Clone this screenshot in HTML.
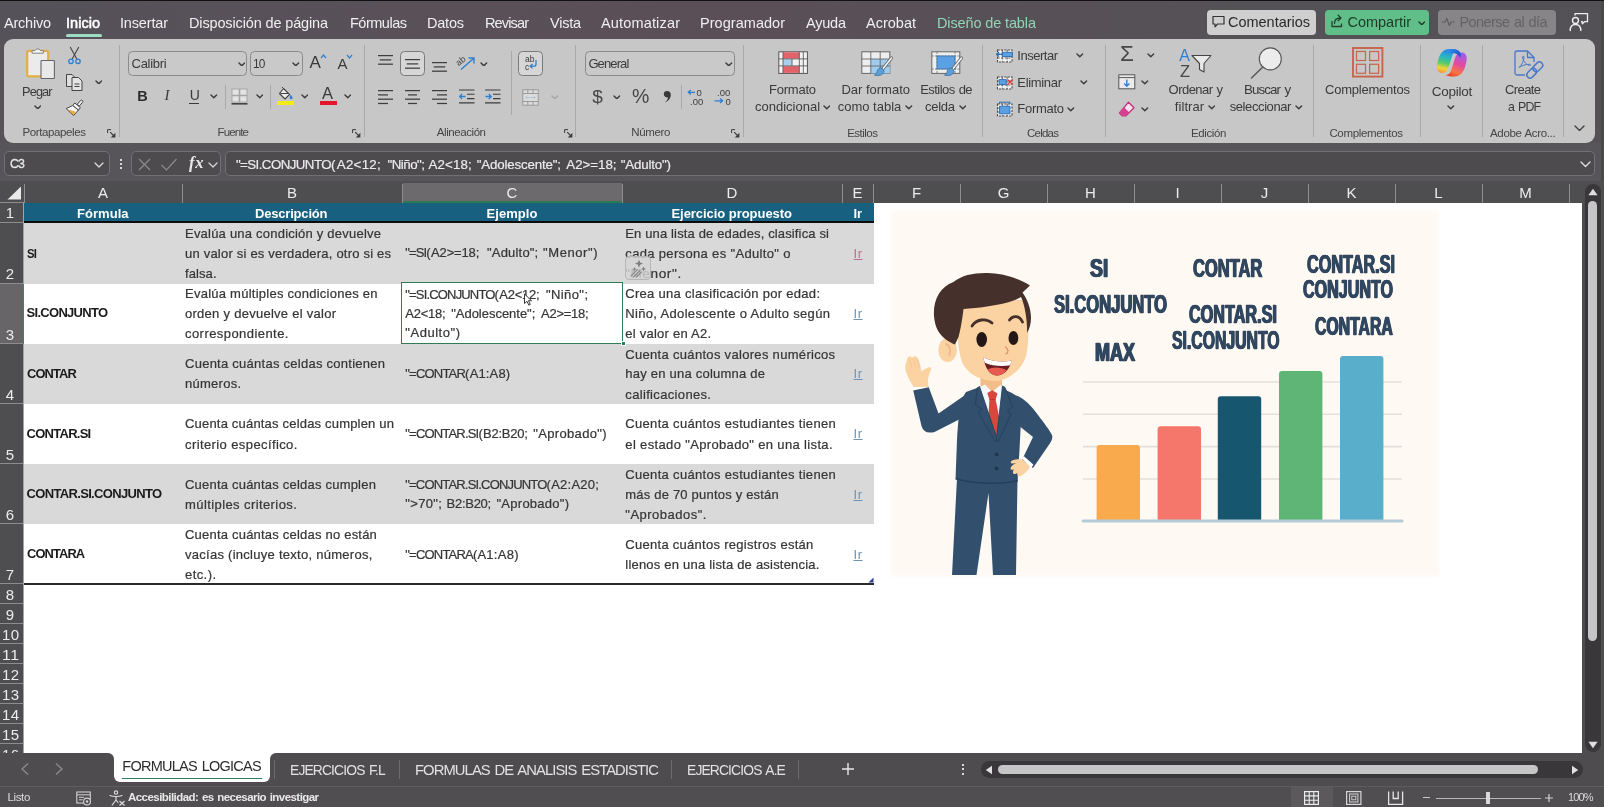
<!DOCTYPE html>
<html lang="es"><head><meta charset="utf-8"><title>Excel</title><style>
html,body{margin:0;padding:0;background:#4d4b4e;}
body{width:1604px;height:807px;overflow:hidden;position:relative;font-family:"Liberation Sans",sans-serif;}
#app{position:absolute;left:0;top:0;width:1604px;height:807px;overflow:hidden;background:#57545a;opacity:0.9999;}
.t{position:absolute;white-space:nowrap;line-height:1;transform-origin:0 50%;}
.b{position:absolute;display:block;}
</style></head><body><div id="app">
<div class="b" style="left:0.0px;top:0.0px;width:1604.0px;height:1.0px;background:#111;"></div>
<div class="b" style="left:0.0px;top:1.0px;width:1604.0px;height:142.0px;background:linear-gradient(90deg,#55525a 0%,#5a5058 30%,#5b4f57 45%,#585057 60%,#545256 80%,#535155 100%);"></div>
<div class="b" style="left:1600.5px;top:1.0px;width:3.5px;height:806.0px;background:#4b494c;"></div>
<div class="b" style="left:3.5px;top:39.0px;width:1591.5px;height:103.5px;background:#c7c7c7;border-radius:9px;"></div>
<div class="b" style="left:0.0px;top:143.0px;width:1598.0px;height:40.0px;background:#57545a;"></div>
<div class="b" style="left:0.0px;top:181.0px;width:1604.0px;height:572.0px;background:#4e4d4f;"></div>
<span class="t" style="left:4.0px;top:16.3px;font-size:14.5px;color:#efefef;letter-spacing:-0.22px;">Archivo</span>
<span class="t" style="left:66.0px;top:16.3px;font-size:14.5px;color:#ffffff;letter-spacing:0.03px;-webkit-text-stroke:0.55px #fff;">Inicio</span>
<span class="t" style="left:120.0px;top:16.3px;font-size:14.5px;color:#efefef;letter-spacing:-0.17px;">Insertar</span>
<span class="t" style="left:189.0px;top:16.3px;font-size:14.5px;color:#efefef;letter-spacing:-0.14px;">Disposición de página</span>
<span class="t" style="left:350.0px;top:16.3px;font-size:14.5px;color:#efefef;letter-spacing:-0.49px;">Fórmulas</span>
<span class="t" style="left:427.0px;top:16.3px;font-size:14.5px;color:#efefef;letter-spacing:-0.22px;">Datos</span>
<span class="t" style="left:485.0px;top:16.3px;font-size:14.5px;color:#efefef;letter-spacing:-0.86px;">Revisar</span>
<span class="t" style="left:550.0px;top:16.3px;font-size:14.5px;color:#efefef;letter-spacing:-0.24px;">Vista</span>
<span class="t" style="left:601.0px;top:16.3px;font-size:14.5px;color:#efefef;letter-spacing:0.16px;">Automatizar</span>
<span class="t" style="left:700.0px;top:16.3px;font-size:14.5px;color:#efefef;letter-spacing:0.04px;">Programador</span>
<span class="t" style="left:806.0px;top:16.3px;font-size:14.5px;color:#efefef;letter-spacing:-0.21px;">Ayuda</span>
<span class="t" style="left:866.0px;top:16.3px;font-size:14.5px;color:#efefef;">Acrobat</span>
<span class="t" style="left:937.0px;top:16.3px;font-size:14.5px;color:#8fd6b4;letter-spacing:-0.13px;">Diseño de tabla</span>
<div class="b" style="left:66.0px;top:34.0px;width:36.0px;height:3.0px;background:#9fdcc4;border-radius:1.5px;"></div>
<div class="b" style="left:1206.7px;top:10.0px;width:109.2px;height:24.5px;background:#cfcfcf;border-radius:4px;"></div>
<svg class="b" style="left:1211.0px;top:14.0px;" width="15" height="15" viewBox="0 0 15 15"><path d="M2 2.5 h11 v7.5 h-6.5 l-2.5 2.8 v-2.8 h-2 z" fill="none" stroke="#333" stroke-width="1.2" stroke-linejoin="round"/></svg>
<span class="t" style="left:1228.0px;top:14.7px;font-size:14.5px;color:#2a2a2a;letter-spacing:-0.02px;">Comentarios</span>
<div class="b" style="left:1325.1px;top:10.0px;width:103.8px;height:24.5px;background:#60bf88;border-radius:4px;"></div>
<svg class="b" style="left:1329.0px;top:13.0px;" width="16" height="16" viewBox="0 0 16 16"><path d="M3 8 v5.5 h9.5 v-3" fill="none" stroke="#20402d" stroke-width="1.3" stroke-linejoin="round"/><path d="M5.5 10.5 c0-4 2.5-5.5 6-5.5 M9.2 2.3 l2.8 2.7 l-2.8 2.7" fill="none" stroke="#20402d" stroke-width="1.3" stroke-linecap="round" stroke-linejoin="round"/></svg>
<span class="t" style="left:1347.5px;top:14.7px;font-size:14.5px;color:#1d3a29;letter-spacing:-0.02px;">Compartir</span>
<svg class="b" style="left:1417.7px;top:20.6px;" width="7.6" height="4.8" viewBox="0 0 7.6 4.8"><path d="M1 1 L3.8 3.8 L6.6 1" fill="none" stroke="#1d3a29" stroke-width="1.45" stroke-linecap="round" stroke-linejoin="round"/></svg>
<div class="b" style="left:1438.0px;top:10.0px;width:117.5px;height:24.5px;background:#878588;border-radius:4px;"></div>
<svg class="b" style="left:1441.0px;top:16.0px;" width="15" height="12" viewBox="0 0 15 12"><path d="M1 6 h3 l1.8-3.5 l2.6 7 l1.8-3.5 h3" fill="none" stroke="#5e5c5f" stroke-width="1.2" stroke-linejoin="round" stroke-linecap="round"/></svg>
<span class="t" style="left:1459.5px;top:14.7px;font-size:14.5px;color:#646265;letter-spacing:-0.57px;word-spacing:0.93px;">Ponerse al día</span>
<svg class="b" style="left:1569.0px;top:12.0px;" width="21" height="20" viewBox="0 0 21 20"><circle cx="6.5" cy="8.5" r="3" fill="none" stroke="#eee" stroke-width="1.4"/><path d="M1.2 18.5 c0-4.5 2.8-6 5.3-6 s5.3 1.5 5.3 6" fill="none" stroke="#eee" stroke-width="1.4" stroke-linecap="round"/><path d="M6 3.5 v-1.8 h12.5 v8 h-3 l-2.2 2 v-2 h-1.3" fill="none" stroke="#eee" stroke-width="1.3" stroke-linejoin="round"/></svg>
<div class="b" style="left:4.0px;top:151.2px;width:106.0px;height:25.0px;background:#4d4b4e;border:1px solid #737073;border-radius:5px;box-sizing:border-box;"></div>
<span class="t" style="left:10.0px;top:157.3px;font-size:13.5px;color:#e6e6e6;letter-spacing:-0.90px;transform:scaleX(0.917);-webkit-text-stroke:0.3px #e6e6e6;">C3</span>
<svg class="b" style="left:93.5px;top:161.5px;" width="10" height="6" viewBox="0 0 10 6"><path d="M1 1 L5.0 5 L9 1" fill="none" stroke="#e0e0e0" stroke-width="1.2" stroke-linecap="round" stroke-linejoin="round"/></svg>
<div class="b" style="left:119.7px;top:159.2px;width:2.0px;height:2.0px;background:#d8d8d8;"></div>
<div class="b" style="left:119.7px;top:163.2px;width:2.0px;height:2.0px;background:#d8d8d8;"></div>
<div class="b" style="left:119.7px;top:167.2px;width:2.0px;height:2.0px;background:#d8d8d8;"></div>
<div class="b" style="left:131.0px;top:151.2px;width:89.5px;height:25.0px;background:#4d4b4e;border:1px solid #737073;border-radius:5px;box-sizing:border-box;"></div>
<svg class="b" style="left:137.0px;top:157.0px;" width="15" height="15" viewBox="0 0 15 15"><path d="M2 2 L13 13 M13 2 L2 13" stroke="#8d8b8e" stroke-width="1.2" fill="none"/></svg>
<svg class="b" style="left:160.0px;top:157.0px;" width="18" height="15" viewBox="0 0 18 15"><path d="M1.5 8 L6.5 13 L16.5 2" stroke="#8d8b8e" stroke-width="1.2" fill="none"/></svg>
<span class="t" style="left:188.5px;top:155.4px;font-size:16px;color:#e8e8e8;font-weight:700;font-style:italic;font-family:'Liberation Serif',serif;letter-spacing:0.60px;transform:scaleX(1.041);">fx</span>
<svg class="b" style="left:207.8px;top:162.0px;" width="10" height="6" viewBox="0 0 10 6"><path d="M1 1 L5.0 5 L9 1" fill="none" stroke="#d8d8d8" stroke-width="1.2" stroke-linecap="round" stroke-linejoin="round"/></svg>
<div class="b" style="left:225.0px;top:151.2px;width:1369.5px;height:25.0px;background:#4d4b4e;border:1px solid #737073;border-radius:5px;box-sizing:border-box;"></div>
<span class="t" style="left:235.9px;top:157.7px;font-size:13.3px;color:#ececec;letter-spacing:-0.56px;-webkit-text-stroke:0.2px #ececec;">"=SI.CONJUNTO(</span>
<span class="t" style="left:336.8px;top:157.7px;font-size:13.3px;color:#ececec;letter-spacing:0.28px;-webkit-text-stroke:0.2px #ececec;">A2&lt;12;</span>
<span class="t" style="left:387.6px;top:157.7px;font-size:13.3px;color:#ececec;letter-spacing:-0.53px;-webkit-text-stroke:0.2px #ececec;">"Niño";</span>
<span class="t" style="left:428.6px;top:157.7px;font-size:13.3px;color:#ececec;letter-spacing:0.10px;-webkit-text-stroke:0.2px #ececec;">A2&lt;18;</span>
<span class="t" style="left:476.8px;top:157.7px;font-size:13.3px;color:#ececec;letter-spacing:-0.16px;-webkit-text-stroke:0.2px #ececec;">"Adolescente";</span>
<span class="t" style="left:566.3px;top:157.7px;font-size:13.3px;color:#ececec;letter-spacing:-0.01px;-webkit-text-stroke:0.2px #ececec;">A2&gt;=18;</span>
<span class="t" style="left:620.8px;top:157.7px;font-size:13.3px;color:#ececec;letter-spacing:-0.17px;-webkit-text-stroke:0.2px #ececec;">"Adulto")</span>
<svg class="b" style="left:1579.5px;top:161.2px;" width="11" height="6.5" viewBox="0 0 11 6.5"><path d="M1 1 L5.5 5.5 L10 1" fill="none" stroke="#e0e0e0" stroke-width="1.3" stroke-linecap="round" stroke-linejoin="round"/></svg>
<div class="b" style="left:24.0px;top:203.0px;width:1558.0px;height:549.5px;background:#ffffff;"></div>
<div class="b" style="left:0.0px;top:181.0px;width:1583.0px;height:22.0px;background:#4e4d4f;"></div>
<div class="b" style="left:402.5px;top:183.0px;width:219.5px;height:19.0px;background:#6c6a6d;"></div>
<div class="b" style="left:402.5px;top:201.0px;width:219.5px;height:2.0px;background:#2d7a52;"></div>
<span class="t" style="left:98.0px;top:184.7px;font-size:15px;color:#ececec;">A</span>
<div class="b" style="left:181.5px;top:183.5px;width:1.0px;height:19.0px;background:#8e8c8f;"></div>
<span class="t" style="left:287.0px;top:184.7px;font-size:15px;color:#ececec;">B</span>
<div class="b" style="left:401.5px;top:183.5px;width:1.0px;height:19.0px;background:#8e8c8f;"></div>
<span class="t" style="left:506.6px;top:184.7px;font-size:15px;color:#ececec;">C</span>
<div class="b" style="left:621.5px;top:183.5px;width:1.0px;height:19.0px;background:#8e8c8f;"></div>
<span class="t" style="left:726.6px;top:184.7px;font-size:15px;color:#ececec;">D</span>
<div class="b" style="left:841.5px;top:183.5px;width:1.0px;height:19.0px;background:#8e8c8f;"></div>
<span class="t" style="left:852.5px;top:184.7px;font-size:15px;color:#ececec;">E</span>
<div class="b" style="left:872.5px;top:183.5px;width:1.0px;height:19.0px;background:#8e8c8f;"></div>
<span class="t" style="left:911.9px;top:184.7px;font-size:15px;color:#ececec;">F</span>
<div class="b" style="left:959.5px;top:183.5px;width:1.0px;height:19.0px;background:#8e8c8f;"></div>
<span class="t" style="left:997.7px;top:184.7px;font-size:15px;color:#ececec;">G</span>
<div class="b" style="left:1046.5px;top:183.5px;width:1.0px;height:19.0px;background:#8e8c8f;"></div>
<span class="t" style="left:1085.1px;top:184.7px;font-size:15px;color:#ececec;">H</span>
<div class="b" style="left:1133.5px;top:183.5px;width:1.0px;height:19.0px;background:#8e8c8f;"></div>
<span class="t" style="left:1175.4px;top:184.7px;font-size:15px;color:#ececec;">I</span>
<div class="b" style="left:1220.5px;top:183.5px;width:1.0px;height:19.0px;background:#8e8c8f;"></div>
<span class="t" style="left:1260.8px;top:184.7px;font-size:15px;color:#ececec;">J</span>
<div class="b" style="left:1307.5px;top:183.5px;width:1.0px;height:19.0px;background:#8e8c8f;"></div>
<span class="t" style="left:1346.5px;top:184.7px;font-size:15px;color:#ececec;">K</span>
<div class="b" style="left:1394.5px;top:183.5px;width:1.0px;height:19.0px;background:#8e8c8f;"></div>
<span class="t" style="left:1434.3px;top:184.7px;font-size:15px;color:#ececec;">L</span>
<div class="b" style="left:1481.5px;top:183.5px;width:1.0px;height:19.0px;background:#8e8c8f;"></div>
<span class="t" style="left:1519.3px;top:184.7px;font-size:15px;color:#ececec;">M</span>
<div class="b" style="left:1568.5px;top:183.5px;width:1.0px;height:19.0px;background:#8e8c8f;"></div>
<div class="b" style="left:23.5px;top:183.5px;width:1.0px;height:19.0px;background:#8e8c8f;"></div>
<div class="b" style="left:0.0px;top:202.0px;width:24.0px;height:1.0px;background:#8e8c8f;"></div>
<svg class="b" style="left:6.0px;top:185.0px;" width="16" height="16" viewBox="0 0 16 16"><path d="M15 1.5 V14.5 H1.5 Z" fill="#e9e9e9"/></svg>
<div class="b" style="left:0.0px;top:203.0px;width:24.0px;height:549.5px;background:#4e4d4f;"></div>
<div class="b" style="left:23.0px;top:203.0px;width:1.0px;height:549.5px;background:#a5a3a6;"></div>
<div class="b" style="left:0.0px;top:283.5px;width:23.0px;height:60.0px;background:#676568;"></div>
<div class="b" style="left:22.5px;top:283.5px;width:1.5px;height:60.0px;background:#3f8562;"></div>
<div class="b" style="left:0.0px;top:222.0px;width:23.0px;height:1.0px;background:#8e8c8f;"></div>
<span class="t" style="left:5.8px;top:205.2px;font-size:15px;color:#ececec;">1</span>
<div class="b" style="left:0.0px;top:282.5px;width:23.0px;height:1.0px;background:#8e8c8f;"></div>
<span class="t" style="left:5.8px;top:266.0px;font-size:15px;color:#ececec;">2</span>
<div class="b" style="left:0.0px;top:343.0px;width:23.0px;height:1.0px;background:#8e8c8f;"></div>
<span class="t" style="left:5.8px;top:326.5px;font-size:15px;color:#ececec;">3</span>
<div class="b" style="left:0.0px;top:403.0px;width:23.0px;height:1.0px;background:#8e8c8f;"></div>
<span class="t" style="left:5.8px;top:386.5px;font-size:15px;color:#ececec;">4</span>
<div class="b" style="left:0.0px;top:463.0px;width:23.0px;height:1.0px;background:#8e8c8f;"></div>
<span class="t" style="left:5.8px;top:446.5px;font-size:15px;color:#ececec;">5</span>
<div class="b" style="left:0.0px;top:523.0px;width:23.0px;height:1.0px;background:#8e8c8f;"></div>
<span class="t" style="left:5.8px;top:506.5px;font-size:15px;color:#ececec;">6</span>
<div class="b" style="left:0.0px;top:583.0px;width:23.0px;height:1.0px;background:#8e8c8f;"></div>
<span class="t" style="left:5.8px;top:566.5px;font-size:15px;color:#ececec;">7</span>
<div class="b" style="left:0.0px;top:603.0px;width:23.0px;height:1.0px;background:#8e8c8f;"></div>
<span class="t" style="left:5.8px;top:586.5px;font-size:15px;color:#ececec;">8</span>
<div class="b" style="left:0.0px;top:623.1px;width:23.0px;height:1.0px;background:#8e8c8f;"></div>
<span class="t" style="left:5.8px;top:606.6px;font-size:15px;color:#ececec;">9</span>
<div class="b" style="left:0.0px;top:643.1px;width:23.0px;height:1.0px;background:#8e8c8f;"></div>
<span class="t" style="left:2.0px;top:626.6px;font-size:15px;color:#ececec;letter-spacing:0.32px;">10</span>
<div class="b" style="left:0.0px;top:663.2px;width:23.0px;height:1.0px;background:#8e8c8f;"></div>
<span class="t" style="left:2.0px;top:646.7px;font-size:15px;color:#ececec;letter-spacing:0.60px;transform:scaleX(1.051);">11</span>
<div class="b" style="left:0.0px;top:683.2px;width:23.0px;height:1.0px;background:#8e8c8f;"></div>
<span class="t" style="left:2.0px;top:666.7px;font-size:15px;color:#ececec;letter-spacing:0.32px;">12</span>
<div class="b" style="left:0.0px;top:703.3px;width:23.0px;height:1.0px;background:#8e8c8f;"></div>
<span class="t" style="left:2.0px;top:686.8px;font-size:15px;color:#ececec;letter-spacing:0.32px;">13</span>
<div class="b" style="left:0.0px;top:723.3px;width:23.0px;height:1.0px;background:#8e8c8f;"></div>
<span class="t" style="left:2.0px;top:706.8px;font-size:15px;color:#ececec;letter-spacing:0.32px;">14</span>
<div class="b" style="left:0.0px;top:743.4px;width:23.0px;height:1.0px;background:#8e8c8f;"></div>
<span class="t" style="left:2.0px;top:726.9px;font-size:15px;color:#ececec;letter-spacing:0.32px;">15</span>
<span class="t" style="left:2.0px;top:746.9px;font-size:15px;color:#ececec;letter-spacing:0.32px;">16</span>
<div class="b" style="left:24.0px;top:203.0px;width:849.5px;height:18.5px;background:#17607f;"></div>
<div class="b" style="left:24.0px;top:221.0px;width:849.5px;height:2.0px;background:#0d0d0d;"></div>
<div class="b" style="left:24.0px;top:223.0px;width:849.5px;height:60.5px;background:#d9d9d9;"></div>
<div class="b" style="left:24.0px;top:343.5px;width:849.5px;height:60.0px;background:#d9d9d9;"></div>
<div class="b" style="left:24.0px;top:463.5px;width:849.5px;height:60.0px;background:#d9d9d9;"></div>
<div class="b" style="left:24.0px;top:582.5px;width:849.5px;height:2.0px;background:#2a2a2a;"></div>
<svg class="b" style="left:868.0px;top:577.0px;" width="6" height="6" viewBox="0 0 6 6"><path d="M5.5 0.5 V5.5 H0.5 Z" fill="#2b3f99"/></svg>
<span class="t" style="left:77.0px;top:207.0px;font-size:13px;color:#ffffff;font-weight:700;letter-spacing:0.04px;">Fórmula</span>
<span class="t" style="left:255.0px;top:207.0px;font-size:13px;color:#ffffff;font-weight:700;letter-spacing:-0.19px;">Descripción</span>
<span class="t" style="left:486.5px;top:207.0px;font-size:13px;color:#ffffff;font-weight:700;letter-spacing:0.07px;">Ejemplo</span>
<span class="t" style="left:671.5px;top:207.0px;font-size:13px;color:#ffffff;font-weight:700;letter-spacing:-0.05px;">Ejercicio propuesto</span>
<span class="t" style="left:853.5px;top:207.0px;font-size:13px;color:#ffffff;font-weight:700;letter-spacing:-0.17px;">Ir</span>
<span class="t" style="left:26.6px;top:246.5px;font-size:13px;color:#1a1a1a;font-weight:700;letter-spacing:-0.90px;transform:scaleX(0.870);">SI</span>
<span class="t" style="left:26.6px;top:306.3px;font-size:13px;color:#1a1a1a;font-weight:700;letter-spacing:-0.72px;">SI.CONJUNTO</span>
<span class="t" style="left:26.6px;top:366.7px;font-size:13px;color:#1a1a1a;font-weight:700;letter-spacing:-0.90px;transform:scaleX(0.991);">CONTAR</span>
<span class="t" style="left:26.6px;top:426.7px;font-size:13px;color:#1a1a1a;font-weight:700;letter-spacing:-0.74px;">CONTAR.SI</span>
<span class="t" style="left:26.6px;top:486.8px;font-size:13px;color:#1a1a1a;font-weight:700;letter-spacing:-0.67px;">CONTAR.SI.CONJUNTO</span>
<span class="t" style="left:26.6px;top:547.0px;font-size:13px;color:#1a1a1a;font-weight:700;letter-spacing:-0.90px;transform:scaleX(0.991);">CONTARA</span>
<span class="t" style="left:185.0px;top:226.5px;font-size:13px;color:#363636;letter-spacing:0.22px;-webkit-text-stroke:0.22px #363636;">Evalúa una condición y devuelve</span>
<span class="t" style="left:185.0px;top:246.5px;font-size:13px;color:#363636;letter-spacing:0.21px;-webkit-text-stroke:0.22px #363636;">un valor si es verdadera, otro si es</span>
<span class="t" style="left:185.0px;top:266.7px;font-size:13px;color:#363636;letter-spacing:0.09px;-webkit-text-stroke:0.22px #363636;">falsa.</span>
<span class="t" style="left:185.0px;top:287.0px;font-size:13px;color:#363636;letter-spacing:0.25px;-webkit-text-stroke:0.22px #363636;">Evalúa múltiples condiciones en</span>
<span class="t" style="left:185.0px;top:307.0px;font-size:13px;color:#363636;letter-spacing:0.27px;-webkit-text-stroke:0.22px #363636;">orden y devuelve el valor</span>
<span class="t" style="left:185.0px;top:327.0px;font-size:13px;color:#363636;letter-spacing:0.44px;-webkit-text-stroke:0.22px #363636;">correspondiente.</span>
<span class="t" style="left:185.0px;top:357.0px;font-size:13px;color:#363636;letter-spacing:0.26px;-webkit-text-stroke:0.22px #363636;">Cuenta cuántas celdas contienen</span>
<span class="t" style="left:185.0px;top:377.2px;font-size:13px;color:#363636;letter-spacing:0.26px;-webkit-text-stroke:0.22px #363636;">números.</span>
<span class="t" style="left:185.0px;top:417.3px;font-size:13px;color:#363636;letter-spacing:0.19px;-webkit-text-stroke:0.22px #363636;">Cuenta cuántas celdas cumplen un</span>
<span class="t" style="left:185.0px;top:437.5px;font-size:13px;color:#363636;letter-spacing:0.40px;-webkit-text-stroke:0.22px #363636;">criterio específico.</span>
<span class="t" style="left:185.0px;top:477.5px;font-size:13px;color:#363636;letter-spacing:0.21px;-webkit-text-stroke:0.22px #363636;">Cuenta cuántas celdas cumplen</span>
<span class="t" style="left:185.0px;top:497.5px;font-size:13px;color:#363636;letter-spacing:0.41px;-webkit-text-stroke:0.22px #363636;">múltiples criterios.</span>
<span class="t" style="left:185.0px;top:527.8px;font-size:13px;color:#363636;letter-spacing:0.21px;-webkit-text-stroke:0.22px #363636;">Cuenta cuántas celdas no están</span>
<span class="t" style="left:185.0px;top:547.8px;font-size:13px;color:#363636;letter-spacing:0.27px;-webkit-text-stroke:0.22px #363636;">vacías (incluye texto, números,</span>
<span class="t" style="left:185.0px;top:568.0px;font-size:13px;color:#363636;letter-spacing:0.42px;-webkit-text-stroke:0.22px #363636;">etc.).</span>
<span class="t" style="left:625.3px;top:226.8px;font-size:13px;color:#363636;letter-spacing:0.14px;-webkit-text-stroke:0.22px #363636;">En una lista de edades, clasifica si</span>
<span class="t" style="left:625.3px;top:246.8px;font-size:13px;color:#363636;letter-spacing:0.34px;-webkit-text-stroke:0.22px #363636;">cada persona es "Adulto" o</span>
<span class="t" style="left:625.3px;top:266.7px;font-size:13px;color:#363636;letter-spacing:0.60px;transform:scaleX(1.043);-webkit-text-stroke:0.22px #363636;">"Menor".</span>
<span class="t" style="left:625.3px;top:287.2px;font-size:13px;color:#363636;letter-spacing:0.29px;-webkit-text-stroke:0.22px #363636;">Crea una clasificación por edad:</span>
<span class="t" style="left:625.3px;top:307.0px;font-size:13px;color:#363636;letter-spacing:0.33px;-webkit-text-stroke:0.22px #363636;">Niño, Adolescente o Adulto según</span>
<span class="t" style="left:625.3px;top:327.2px;font-size:13px;color:#363636;letter-spacing:0.24px;-webkit-text-stroke:0.22px #363636;">el valor en A2.</span>
<span class="t" style="left:625.3px;top:347.5px;font-size:13px;color:#363636;letter-spacing:0.31px;-webkit-text-stroke:0.22px #363636;">Cuenta cuántos valores numéricos</span>
<span class="t" style="left:625.3px;top:367.3px;font-size:13px;color:#363636;letter-spacing:0.23px;-webkit-text-stroke:0.22px #363636;">hay en una columna de</span>
<span class="t" style="left:625.3px;top:387.5px;font-size:13px;color:#363636;letter-spacing:0.34px;-webkit-text-stroke:0.22px #363636;">calificaciones.</span>
<span class="t" style="left:625.3px;top:417.3px;font-size:13px;color:#363636;letter-spacing:0.32px;-webkit-text-stroke:0.22px #363636;">Cuenta cuántos estudiantes tienen</span>
<span class="t" style="left:625.3px;top:437.5px;font-size:13px;color:#363636;letter-spacing:0.35px;-webkit-text-stroke:0.22px #363636;">el estado "Aprobado" en una lista.</span>
<span class="t" style="left:625.3px;top:467.8px;font-size:13px;color:#363636;letter-spacing:0.32px;-webkit-text-stroke:0.22px #363636;">Cuenta cuántos estudiantes tienen</span>
<span class="t" style="left:625.3px;top:487.8px;font-size:13px;color:#363636;letter-spacing:0.20px;-webkit-text-stroke:0.22px #363636;">más de 70 puntos y están</span>
<span class="t" style="left:625.3px;top:507.7px;font-size:13px;color:#363636;letter-spacing:0.49px;-webkit-text-stroke:0.22px #363636;">"Aprobados".</span>
<span class="t" style="left:625.3px;top:538.0px;font-size:13px;color:#363636;letter-spacing:0.28px;-webkit-text-stroke:0.22px #363636;">Cuenta cuántos registros están</span>
<span class="t" style="left:625.3px;top:558.2px;font-size:13px;color:#363636;letter-spacing:0.21px;-webkit-text-stroke:0.22px #363636;">llenos en una lista de asistencia.</span>
<span class="t" style="left:405.3px;top:246.3px;font-size:13px;color:#363636;letter-spacing:-0.88px;-webkit-text-stroke:0.22px #363636;">"=SI(</span>
<span class="t" style="left:431.1px;top:246.3px;font-size:13px;color:#363636;letter-spacing:-0.16px;-webkit-text-stroke:0.22px #363636;">A2&gt;=18;</span>
<span class="t" style="left:487.0px;top:246.3px;font-size:13px;color:#363636;letter-spacing:0.19px;-webkit-text-stroke:0.22px #363636;">"Adulto";</span>
<span class="t" style="left:543.1px;top:246.3px;font-size:13px;color:#363636;letter-spacing:0.57px;-webkit-text-stroke:0.22px #363636;">"Menor")</span>
<span class="t" style="left:405.3px;top:367.0px;font-size:13px;color:#363636;letter-spacing:-0.80px;-webkit-text-stroke:0.22px #363636;">"=CONTAR(</span>
<span class="t" style="left:469.7px;top:367.0px;font-size:13px;color:#363636;letter-spacing:0.13px;-webkit-text-stroke:0.22px #363636;">A1:A8)</span>
<span class="t" style="left:405.3px;top:426.7px;font-size:13px;color:#363636;letter-spacing:-0.81px;-webkit-text-stroke:0.22px #363636;">"=CONTAR.SI(</span>
<span class="t" style="left:483.0px;top:426.7px;font-size:13px;color:#363636;letter-spacing:-0.23px;-webkit-text-stroke:0.22px #363636;">B2:B20;</span>
<span class="t" style="left:533.3px;top:426.7px;font-size:13px;color:#363636;letter-spacing:0.33px;-webkit-text-stroke:0.22px #363636;">"Aprobado")</span>
<span class="t" style="left:405.3px;top:478.0px;font-size:13px;color:#363636;letter-spacing:-0.82px;-webkit-text-stroke:0.22px #363636;">"=CONTAR.SI.CONJUNTO(</span>
<span class="t" style="left:551.2px;top:478.0px;font-size:13px;color:#363636;letter-spacing:0.24px;-webkit-text-stroke:0.22px #363636;">A2:A20;</span>
<span class="t" style="left:405.3px;top:497.4px;font-size:13px;color:#363636;letter-spacing:0.32px;-webkit-text-stroke:0.22px #363636;">"&gt;70";</span>
<span class="t" style="left:446.6px;top:497.4px;font-size:13px;color:#363636;letter-spacing:-0.28px;-webkit-text-stroke:0.22px #363636;">B2:B20;</span>
<span class="t" style="left:496.5px;top:497.4px;font-size:13px;color:#363636;letter-spacing:0.26px;-webkit-text-stroke:0.22px #363636;">"Aprobado")</span>
<span class="t" style="left:405.3px;top:547.5px;font-size:13px;color:#363636;letter-spacing:-0.80px;-webkit-text-stroke:0.22px #363636;">"=CONTARA(</span>
<span class="t" style="left:477.4px;top:547.5px;font-size:13px;color:#363636;letter-spacing:0.27px;-webkit-text-stroke:0.22px #363636;">A1:A8)</span>
<span class="t" style="left:853.5px;top:246.5px;font-size:13px;color:#b9708f;letter-spacing:0.56px;text-decoration:underline;">Ir</span>
<span class="t" style="left:853.5px;top:306.7px;font-size:13px;color:#6f93b3;letter-spacing:0.56px;text-decoration:underline;">Ir</span>
<span class="t" style="left:853.5px;top:367.0px;font-size:13px;color:#6f93b3;letter-spacing:0.56px;text-decoration:underline;">Ir</span>
<span class="t" style="left:853.5px;top:427.3px;font-size:13px;color:#6f93b3;letter-spacing:0.56px;text-decoration:underline;">Ir</span>
<span class="t" style="left:853.5px;top:487.5px;font-size:13px;color:#6f93b3;letter-spacing:0.56px;text-decoration:underline;">Ir</span>
<span class="t" style="left:853.5px;top:547.5px;font-size:13px;color:#6f93b3;letter-spacing:0.56px;text-decoration:underline;">Ir</span>
<div class="b" style="left:401.0px;top:281.7px;width:222.2px;height:62.3px;background:#ffffff;border:1.5px solid #2f7d57;box-sizing:border-box;"></div>
<div class="b" style="left:620.5px;top:341.0px;width:5.0px;height:5.0px;background:#2f7d57;border:1px solid #fff;box-sizing:border-box;"></div>
<span class="t" style="left:405.3px;top:287.5px;font-size:13px;color:#363636;letter-spacing:-0.83px;-webkit-text-stroke:0.22px #363636;">"=SI.CONJUNTO(</span>
<span class="t" style="left:499.3px;top:287.5px;font-size:13px;color:#363636;letter-spacing:-0.25px;-webkit-text-stroke:0.22px #363636;">A2&lt;12;</span>
<span class="t" style="left:545.9px;top:287.5px;font-size:13px;color:#363636;letter-spacing:0.42px;-webkit-text-stroke:0.22px #363636;">"Niño";</span>
<span class="t" style="left:405.3px;top:306.6px;font-size:13px;color:#363636;letter-spacing:-0.25px;-webkit-text-stroke:0.22px #363636;">A2&lt;18;</span>
<span class="t" style="left:451.2px;top:306.6px;font-size:13px;color:#363636;letter-spacing:-0.02px;-webkit-text-stroke:0.22px #363636;">"Adolescente";</span>
<span class="t" style="left:541.0px;top:306.6px;font-size:13px;color:#363636;letter-spacing:-0.24px;-webkit-text-stroke:0.22px #363636;">A2&gt;=18;</span>
<span class="t" style="left:405.3px;top:325.7px;font-size:13px;color:#363636;letter-spacing:0.53px;-webkit-text-stroke:0.22px #363636;">"Adulto")</span>
<div class="b" style="left:625.3px;top:256.2px;width:26.2px;height:24.3px;background:rgba(214,214,214,0.82);border:1px solid #b6b6b6;border-radius:4px;box-sizing:border-box;"></div>
<svg class="b" style="left:628.0px;top:258.0px;" width="22" height="21" viewBox="0 0 22 21"><g fill="#7d7d7d" stroke="none"><path d="M11 1.5 l1.100 3 l3 1.100 l-3 1.100 l-1.100 3 l-1.100-3 l-3-1.100 l3-1.100 z"/><path d="M15.500 8.500 l.7 1.800 l1.800.7 l-1.800.7 l-.7 1.800 l-.7-1.800 l-1.800-.7 l1.800-.7 z"/><path d="M6.500 9 l.6 1.500 l1.500.6 l-1.500.6 l-.6 1.500 l-.6-1.500 l-1.500-.6 l1.500-.6 z"/></g><path d="M3 18 L9.500 11.500 M5.500 19 L12 12.500 M8.500 19 L13.500 14" stroke="#8a8a8a" stroke-width="1.100" stroke-linecap="round"/></svg>
<svg class="b" style="left:522.5px;top:292.5px;" width="10" height="14" viewBox="0 0 10 14"><path d="M1.5 1 V10.5 L4 8.3 L5.8 12.2 L7.3 11.5 L5.5 7.7 H8.5 Z" fill="#fff" stroke="#222" stroke-width="0.9" stroke-linejoin="round"/></svg>
<div class="b" style="left:119.2px;top:45.0px;width:1.0px;height:92.0px;background:#a9a8aa;"></div>
<div class="b" style="left:364.1px;top:45.0px;width:1.0px;height:92.0px;background:#a9a8aa;"></div>
<div class="b" style="left:575.2px;top:45.0px;width:1.0px;height:92.0px;background:#a9a8aa;"></div>
<div class="b" style="left:743.1px;top:45.0px;width:1.0px;height:92.0px;background:#a9a8aa;"></div>
<div class="b" style="left:982.1px;top:45.0px;width:1.0px;height:92.0px;background:#a9a8aa;"></div>
<div class="b" style="left:1104.7px;top:45.0px;width:1.0px;height:92.0px;background:#a9a8aa;"></div>
<div class="b" style="left:1313.2px;top:45.0px;width:1.0px;height:92.0px;background:#a9a8aa;"></div>
<div class="b" style="left:1419.9px;top:45.0px;width:1.0px;height:92.0px;background:#a9a8aa;"></div>
<div class="b" style="left:1482.3px;top:45.0px;width:1.0px;height:92.0px;background:#a9a8aa;"></div>
<div class="b" style="left:1562.5px;top:45.0px;width:1.0px;height:92.0px;background:#a9a8aa;"></div>
<svg class="b" style="left:25.0px;top:46.0px;" width="32" height="34" viewBox="0 0 32 34"><rect x="2.2" y="4.8" width="21" height="25.5" rx="1.5" fill="#ebebeb" stroke="#e3ae43" stroke-width="2.2"/>
<path d="M7 7.2 V4.6 H10 A3 3 0 0 1 15.4 4.6 H18.4 V7.2 Z" fill="#f4f4f4" stroke="#777" stroke-width="0.9"/>
<rect x="16" y="14.5" width="13.4" height="18" rx="0.8" fill="#e9e9e9" stroke="#666" stroke-width="1.1"/></svg>
<span class="t" style="left:22.4px;top:84.8px;font-size:13px;color:#3b3a3c;letter-spacing:-0.90px;transform:scaleX(0.984);">Pegar</span>
<svg class="b" style="left:33.5px;top:104.6px;" width="7.6" height="4.8" viewBox="0 0 7.6 4.8"><path d="M1 1 L3.8 3.8 L6.6 1" fill="none" stroke="#3d3c3e" stroke-width="1.45" stroke-linecap="round" stroke-linejoin="round"/></svg>
<svg class="b" style="left:67.0px;top:46.0px;" width="15" height="19" viewBox="0 0 15 19"><path d="M3.2 1 L9.8 13 M11.8 1 L5.2 13" stroke="#444" stroke-width="1.1" fill="none"/>
<circle cx="4" cy="15.3" r="2.2" fill="none" stroke="#2f7fd0" stroke-width="1.3"/><circle cx="11" cy="15.3" r="2.2" fill="none" stroke="#2f7fd0" stroke-width="1.3"/></svg>
<svg class="b" style="left:64.5px;top:72.5px;" width="19" height="19" viewBox="0 0 19 19"><path d="M1.5 1.5 H7 L9.5 4 V13.5 H1.5 Z" fill="#dedede" stroke="#444" stroke-width="1"/>
<path d="M7 4.5 H13.5 L17 8 V17.5 H7 Z" fill="#e4e4e4" stroke="#444" stroke-width="1"/><path d="M9.5 11 H14.5 M9.5 13.5 H14.5" stroke="#444" stroke-width="1"/></svg>
<svg class="b" style="left:94.7px;top:79.6px;" width="7.6" height="4.8" viewBox="0 0 7.6 4.8"><path d="M1 1 L3.8 3.8 L6.6 1" fill="none" stroke="#3d3c3e" stroke-width="1.45" stroke-linecap="round" stroke-linejoin="round"/></svg>
<svg class="b" style="left:65.0px;top:99.0px;" width="19" height="18" viewBox="0 0 19 18"><path d="M12.2 5.2 L15.6 1.6 a1.3 1.3 0 0 1 1.9 1.8 L14.2 7.2 Z" fill="#e8e8e8" stroke="#444" stroke-width="1" stroke-linejoin="round"/>
<path d="M9.8 4 L15.4 8.6 L13.4 11 L7.6 6.6 Z" fill="#f1f1f1" stroke="#444" stroke-width="1" stroke-linejoin="round"/>
<path d="M7.6 6.6 L13.4 11 L8.6 16.6 L1.2 9.6 Z" fill="#f7f7f7" stroke="#444" stroke-width="1" stroke-linejoin="round"/>
<path d="M4 10.8 L10.6 12.8 L8.6 16.2 L2.6 10.4 Z" fill="#e9a93a"/></svg>
<span class="t" style="left:22.4px;top:126.8px;font-size:11.5px;color:#454446;letter-spacing:-0.38px;">Portapapeles</span>
<svg class="b" style="left:107.3px;top:128.5px;" width="9" height="9" viewBox="0 0 9 9"><path d="M0.6 4 V0.6 H4" fill="none" stroke="#3d3c3e" stroke-width="1"/><path d="M3.2 3.2 L7 7" fill="none" stroke="#3d3c3e" stroke-width="1.1"/><path d="M8.4 3.8 V8.4 H3.8 Z" fill="#3d3c3e"/></svg>
<div class="b" style="left:128.4px;top:51.0px;width:119.0px;height:24.5px;background:#c9c9c9;border:1px solid #8b8a8c;border-radius:4.5px;box-sizing:border-box;"></div>
<span class="t" style="left:131.6px;top:56.8px;font-size:13px;color:#3b3a3c;letter-spacing:-0.31px;">Calibri</span>
<svg class="b" style="left:237.6px;top:61.6px;" width="7.6" height="4.8" viewBox="0 0 7.6 4.8"><path d="M1 1 L3.8 3.8 L6.6 1" fill="none" stroke="#3d3c3e" stroke-width="1.45" stroke-linecap="round" stroke-linejoin="round"/></svg>
<div class="b" style="left:250.0px;top:51.0px;width:52.5px;height:24.5px;background:#c9c9c9;border:1px solid #8b8a8c;border-radius:4.5px;box-sizing:border-box;"></div>
<span class="t" style="left:253.2px;top:56.8px;font-size:13px;color:#3b3a3c;letter-spacing:-0.90px;transform:scaleX(0.914);">10</span>
<svg class="b" style="left:292.2px;top:61.6px;" width="7.6" height="4.8" viewBox="0 0 7.6 4.8"><path d="M1 1 L3.8 3.8 L6.6 1" fill="none" stroke="#3d3c3e" stroke-width="1.45" stroke-linecap="round" stroke-linejoin="round"/></svg>
<span class="t" style="left:309.5px;top:53.9px;font-size:17px;color:#3b3a3c;">A</span>
<svg class="b" style="left:320.0px;top:54.0px;" width="7" height="5" viewBox="0 0 7 5"><path d="M1 4 L3.5 1 L6 4" fill="none" stroke="#2f7fd0" stroke-width="1.2"/></svg>
<span class="t" style="left:337.5px;top:56.0px;font-size:15px;color:#3b3a3c;">A</span>
<svg class="b" style="left:346.0px;top:54.0px;" width="7" height="5" viewBox="0 0 7 5"><path d="M1 1 L3.5 4 L6 1" fill="none" stroke="#2f7fd0" stroke-width="1.2"/></svg>
<span class="t" style="left:137.3px;top:88.5px;font-size:14.5px;color:#2c2c2c;font-weight:700;">B</span>
<span class="t" style="left:164.5px;top:88.3px;font-size:15px;color:#3a3a3a;font-style:italic;font-family:'Liberation Serif',serif;">I</span>
<span class="t" style="left:189.8px;top:88.1px;font-size:14px;color:#3a3a3a;">U</span>
<div class="b" style="left:189.3px;top:103.3px;width:10.0px;height:1.1px;background:#3a3a3a;"></div>
<svg class="b" style="left:210.2px;top:94.4px;" width="7.6" height="4.8" viewBox="0 0 7.6 4.8"><path d="M1 1 L3.8 3.8 L6.6 1" fill="none" stroke="#3d3c3e" stroke-width="1.45" stroke-linecap="round" stroke-linejoin="round"/></svg>
<div class="b" style="left:224.7px;top:85.0px;width:1.0px;height:23.5px;background:#a9a8aa;"></div>
<svg class="b" style="left:231.0px;top:88.0px;" width="17" height="17" viewBox="0 0 17 17"><rect x="1" y="1" width="15" height="13" fill="#e3e3e3" stroke="#a5a5a5" stroke-width="1"/>
<path d="M8.5 1 V14 M1 7.5 H16" stroke="#a5a5a5" stroke-width="1.6"/><path d="M0.5 15.8 H16.5" stroke="#444" stroke-width="1.6"/></svg>
<svg class="b" style="left:255.6px;top:94.4px;" width="7.6" height="4.8" viewBox="0 0 7.6 4.8"><path d="M1 1 L3.8 3.8 L6.6 1" fill="none" stroke="#3d3c3e" stroke-width="1.45" stroke-linecap="round" stroke-linejoin="round"/></svg>
<div class="b" style="left:270.2px;top:85.0px;width:1.0px;height:23.5px;background:#a9a8aa;"></div>
<svg class="b" style="left:277.0px;top:86.0px;" width="17" height="15" viewBox="0 0 17 15"><path d="M6.5 2.5 L12.5 8.5 L8 13 L2.5 7.5 Z" fill="#ececec" stroke="#444" stroke-width="1.1" stroke-linejoin="round"/>
<path d="M6.5 2.5 L5 1 M3.5 7.5 H11.5" stroke="#444" stroke-width="1"/><path d="M13.8 8.5 c1.2 1.8 1.7 2.6 1.7 3.4 a1.4 1.4 0 0 1 -2.8 0 c0-.8.3-1.6 1.1-3.4z" fill="#2f7fd0"/></svg>
<div class="b" style="left:276.8px;top:101.0px;width:17.2px;height:4.3px;background:#f3ea1a;"></div>
<svg class="b" style="left:300.9px;top:94.4px;" width="7.6" height="4.8" viewBox="0 0 7.6 4.8"><path d="M1 1 L3.8 3.8 L6.6 1" fill="none" stroke="#3d3c3e" stroke-width="1.45" stroke-linecap="round" stroke-linejoin="round"/></svg>
<span class="t" style="left:322.0px;top:84.6px;font-size:16.5px;color:#3a3a3a;">A</span>
<div class="b" style="left:319.7px;top:101.0px;width:17.2px;height:4.3px;background:#e5142a;"></div>
<svg class="b" style="left:343.6px;top:94.4px;" width="7.6" height="4.8" viewBox="0 0 7.6 4.8"><path d="M1 1 L3.8 3.8 L6.6 1" fill="none" stroke="#3d3c3e" stroke-width="1.45" stroke-linecap="round" stroke-linejoin="round"/></svg>
<span class="t" style="left:217.5px;top:126.8px;font-size:11.5px;color:#454446;letter-spacing:-0.86px;">Fuente</span>
<svg class="b" style="left:351.6px;top:128.5px;" width="9" height="9" viewBox="0 0 9 9"><path d="M0.6 4 V0.6 H4" fill="none" stroke="#3d3c3e" stroke-width="1"/><path d="M3.2 3.2 L7 7" fill="none" stroke="#3d3c3e" stroke-width="1.1"/><path d="M8.4 3.8 V8.4 H3.8 Z" fill="#3d3c3e"/></svg>
<svg class="b" style="left:378.0px;top:55.3px;" width="15" height="13.899999999999999" viewBox="0 0 15 13.899999999999999"><path d="M0.0 0.6 H15.0" stroke="#3d3c3e" stroke-width="1.25"/><path d="M1.75 4.8999999999999995 H13.25" stroke="#3d3c3e" stroke-width="1.25"/><path d="M0.0 9.2 H15.0" stroke="#3d3c3e" stroke-width="1.25"/></svg>
<div class="b" style="left:400.0px;top:51.0px;width:25.0px;height:24.5px;background:#d6d6d6;border:1px solid #7a797b;border-radius:4.5px;box-sizing:border-box;"></div>
<svg class="b" style="left:405.0px;top:58.6px;" width="15" height="13.899999999999999" viewBox="0 0 15 13.899999999999999"><path d="M0.0 0.6 H15.0" stroke="#3d3c3e" stroke-width="1.25"/><path d="M1.75 4.8999999999999995 H13.25" stroke="#3d3c3e" stroke-width="1.25"/><path d="M0.0 9.2 H15.0" stroke="#3d3c3e" stroke-width="1.25"/></svg>
<svg class="b" style="left:431.8px;top:61.8px;" width="15" height="13.899999999999999" viewBox="0 0 15 13.899999999999999"><path d="M0.0 0.6 H15.0" stroke="#3d3c3e" stroke-width="1.25"/><path d="M1.75 4.8999999999999995 H13.25" stroke="#3d3c3e" stroke-width="1.25"/><path d="M0.0 9.2 H15.0" stroke="#3d3c3e" stroke-width="1.25"/></svg>
<svg class="b" style="left:456.0px;top:53.0px;" width="21" height="19" viewBox="0 0 21 19"><text x="1" y="11" font-size="9" font-family="Liberation Sans" fill="#3d3c3e" transform="rotate(-38 5 10)">ab</text>
<path d="M5 16.5 L17.5 5.5 M12.5 5 H18 V10.5" fill="none" stroke="#2f7fd0" stroke-width="1.4"/></svg>
<svg class="b" style="left:480.2px;top:61.6px;" width="7.6" height="4.8" viewBox="0 0 7.6 4.8"><path d="M1 1 L3.8 3.8 L6.6 1" fill="none" stroke="#3d3c3e" stroke-width="1.45" stroke-linecap="round" stroke-linejoin="round"/></svg>
<svg class="b" style="left:378.0px;top:89.8px;" width="15" height="18.2" viewBox="0 0 15 18.2"><path d="M0 0.6 H15" stroke="#3d3c3e" stroke-width="1.25"/><path d="M0 4.8999999999999995 H10" stroke="#3d3c3e" stroke-width="1.25"/><path d="M0 9.2 H15" stroke="#3d3c3e" stroke-width="1.25"/><path d="M0 13.499999999999998 H10" stroke="#3d3c3e" stroke-width="1.25"/></svg>
<svg class="b" style="left:405.0px;top:89.8px;" width="15" height="18.2" viewBox="0 0 15 18.2"><path d="M0.0 0.6 H15.0" stroke="#3d3c3e" stroke-width="1.25"/><path d="M3.0 4.8999999999999995 H12.0" stroke="#3d3c3e" stroke-width="1.25"/><path d="M0.0 9.2 H15.0" stroke="#3d3c3e" stroke-width="1.25"/><path d="M3.0 13.499999999999998 H12.0" stroke="#3d3c3e" stroke-width="1.25"/></svg>
<svg class="b" style="left:431.8px;top:89.8px;" width="15" height="18.2" viewBox="0 0 15 18.2"><path d="M0 0.6 H15" stroke="#3d3c3e" stroke-width="1.25"/><path d="M5 4.8999999999999995 H15" stroke="#3d3c3e" stroke-width="1.25"/><path d="M0 9.2 H15" stroke="#3d3c3e" stroke-width="1.25"/><path d="M5 13.499999999999998 H15" stroke="#3d3c3e" stroke-width="1.25"/></svg>
<svg class="b" style="left:458.5px;top:89.0px;" width="16" height="15" viewBox="0 0 16 15"><path d="M0 1 H15.5 M8 5.3 H15.5 M8 9.6 H15.5 M0 13.9 H15.5" stroke="#3d3c3e" stroke-width="1.1"/><path d="M6.5 7.5 H0.8 M3 5 L0.6 7.5 L3 10" fill="none" stroke="#2f7fd0" stroke-width="1.3"/></svg>
<svg class="b" style="left:485.0px;top:89.0px;" width="16" height="15" viewBox="0 0 16 15"><path d="M0 1 H15.5 M8 5.3 H15.5 M8 9.6 H15.5 M0 13.9 H15.5" stroke="#3d3c3e" stroke-width="1.1"/><path d="M0.5 7.5 H6 M3.8 5 L6.2 7.5 L3.8 10" fill="none" stroke="#2f7fd0" stroke-width="1.3"/></svg>
<div class="b" style="left:511.0px;top:51.0px;width:1.0px;height:64.0px;background:#a9a8aa;"></div>
<div class="b" style="left:518.4px;top:51.0px;width:24.6px;height:24.5px;background:#d6d6d6;border:1px solid #7a797b;border-radius:4.5px;box-sizing:border-box;"></div>
<svg class="b" style="left:521.0px;top:53.0px;" width="20" height="20" viewBox="0 0 20 20"><text x="4" y="9" font-size="8.5" font-family="Liberation Sans" fill="#3d3c3e">ab</text><text x="4" y="16.5" font-size="8.5" font-family="Liberation Sans" fill="#3d3c3e">c</text>
<path d="M15 7 v4.2 a2 2 0 0 1 -2 2 h-3.5 M11.5 11 l-2.3 2.2 l2.3 2.2" fill="none" stroke="#2f7fd0" stroke-width="1.3"/></svg>
<svg class="b" style="left:522.0px;top:88.5px;" width="17" height="17" viewBox="0 0 17 17"><rect x="0.8" y="0.8" width="15.4" height="15.4" fill="#dcdcdc" stroke="#9a999b" stroke-width="1"/>
<path d="M0.8 4.5 H16.2 M0.8 12.5 H16.2 M5.8 0.8 V4.5 M11 0.8 V4.5 M5.8 12.5 V16.2 M11 12.5 V16.2" stroke="#9a999b" stroke-width="1"/>
<path d="M3.5 8.5 H13.5 M5.3 7 L3.5 8.5 L5.3 10 M11.7 7 L13.5 8.5 L11.7 10" fill="none" stroke="#b5c4d6" stroke-width="1"/></svg>
<svg class="b" style="left:551.2px;top:94.6px;" width="7.6" height="4.8" viewBox="0 0 7.6 4.8"><path d="M1 1 L3.8 3.8 L6.6 1" fill="none" stroke="#a6a5a7" stroke-width="1.45" stroke-linecap="round" stroke-linejoin="round"/></svg>
<span class="t" style="left:436.8px;top:126.8px;font-size:11.5px;color:#454446;letter-spacing:-0.43px;">Alineación</span>
<svg class="b" style="left:563.8px;top:128.5px;" width="9" height="9" viewBox="0 0 9 9"><path d="M0.6 4 V0.6 H4" fill="none" stroke="#3d3c3e" stroke-width="1"/><path d="M3.2 3.2 L7 7" fill="none" stroke="#3d3c3e" stroke-width="1.1"/><path d="M8.4 3.8 V8.4 H3.8 Z" fill="#3d3c3e"/></svg>
<div class="b" style="left:585.2px;top:51.0px;width:150.2px;height:24.5px;background:#c9c9c9;border:1px solid #8b8a8c;border-radius:4.5px;box-sizing:border-box;"></div>
<span class="t" style="left:588.4px;top:56.8px;font-size:13px;color:#3b3a3c;letter-spacing:-0.89px;">General</span>
<svg class="b" style="left:725.2px;top:61.6px;" width="7.6" height="4.8" viewBox="0 0 7.6 4.8"><path d="M1 1 L3.8 3.8 L6.6 1" fill="none" stroke="#3d3c3e" stroke-width="1.45" stroke-linecap="round" stroke-linejoin="round"/></svg>
<span class="t" style="left:592.2px;top:86.6px;font-size:19px;color:#474648;">$</span>
<svg class="b" style="left:613.2px;top:94.6px;" width="7.6" height="4.8" viewBox="0 0 7.6 4.8"><path d="M1 1 L3.8 3.8 L6.6 1" fill="none" stroke="#3d3c3e" stroke-width="1.45" stroke-linecap="round" stroke-linejoin="round"/></svg>
<span class="t" style="left:632.0px;top:86.8px;font-size:19.5px;color:#474648;">%</span>
<svg class="b" style="left:662.0px;top:89.8px;" width="11" height="15" viewBox="0 0 11 15"><path d="M5.2 1 a3.6 3.6 0 0 1 3.6 3.8 c0 3.6-2.4 6.6-6.2 7.8 c2-1.600 3.200-3.300 3.400-5.200 a3.400 3.400 0 0 1 -4.200-3.200 a3.300 3.300 0 0 1 3.400-3.200z" fill="#3a3a3a"/></svg>
<div class="b" style="left:681.2px;top:85.0px;width:1.0px;height:23.5px;background:#a9a8aa;"></div>
<svg class="b" style="left:687.0px;top:87.5px;" width="19" height="18" viewBox="0 0 19 18"><text x="9.5" y="7.8" font-size="9.5" font-family="Liberation Sans" fill="#3d3c3e">0</text><text x="3" y="16.5" font-size="9.5" font-family="Liberation Sans" fill="#3d3c3e">.00</text>
<path d="M8 4.3 H1.5 M3.8 2 L1.3 4.3 L3.8 6.6" fill="none" stroke="#2f7fd0" stroke-width="1.3"/></svg>
<svg class="b" style="left:713.0px;top:87.5px;" width="20" height="18" viewBox="0 0 20 18"><text x="4" y="7.5" font-size="9.5" font-family="Liberation Sans" fill="#3d3c3e">.00</text><text x="12.5" y="16.5" font-size="9.5" font-family="Liberation Sans" fill="#3d3c3e">0</text>
<path d="M1.5 12.8 H9.5 M7 10.5 L9.6 12.8 L7 15.1" fill="none" stroke="#2f7fd0" stroke-width="1.3"/></svg>
<span class="t" style="left:631.3px;top:126.8px;font-size:11.5px;color:#454446;letter-spacing:-0.34px;">Número</span>
<svg class="b" style="left:730.9px;top:128.5px;" width="9" height="9" viewBox="0 0 9 9"><path d="M0.6 4 V0.6 H4" fill="none" stroke="#3d3c3e" stroke-width="1"/><path d="M3.2 3.2 L7 7" fill="none" stroke="#3d3c3e" stroke-width="1.1"/><path d="M8.4 3.8 V8.4 H3.8 Z" fill="#3d3c3e"/></svg>
<svg class="b" style="left:777.5px;top:50.5px;" width="31" height="24" viewBox="0 0 31 24"><rect x="0.8" y="0.8" width="28.6" height="21.6" fill="#f3f3f3" stroke="#555" stroke-width="1"/>
<rect x="5" y="1.3" width="16.3" height="6.3" fill="#e4636b"/><rect x="5" y="15.2" width="16.3" height="6.7" fill="#e4636b"/><rect x="5" y="8.2" width="9" height="6.4" fill="#a7d0f0"/>
<path d="M0.8 7.9 H29.4 M0.8 14.9 H29.4 M5 0.8 V22.4 M21.3 0.8 V22.4 M25.3 0.8 V22.4 M14 7.9 V14.9" stroke="#5c5c5c" stroke-width="0.9" fill="none"/></svg>
<span class="t" style="left:769.0px;top:83.4px;font-size:13px;color:#3b3a3c;letter-spacing:-0.23px;">Formato</span>
<span class="t" style="left:755.0px;top:100.0px;font-size:13px;color:#3b3a3c;">condicional</span>
<svg class="b" style="left:822.5px;top:104.9px;" width="7.6" height="4.8" viewBox="0 0 7.6 4.8"><path d="M1 1 L3.8 3.8 L6.6 1" fill="none" stroke="#3d3c3e" stroke-width="1.45" stroke-linecap="round" stroke-linejoin="round"/></svg>
<svg class="b" style="left:860.5px;top:50.5px;" width="33" height="29" viewBox="0 0 33 29"><rect x="0.8" y="0.8" width="28" height="21.6" fill="#eeeeee" stroke="#666" stroke-width="1"/>
<rect x="9.8" y="8" width="19" height="14.4" fill="#9fcbee"/>
<path d="M0.8 8 H28.8 M0.8 15 H28.8 M9.8 0.8 V22.4 M19.2 0.8 V22.4" stroke="#666" stroke-width="0.9" fill="none"/><path d="M30.5 7 L21 19" stroke="#666" stroke-width="3.2" stroke-linecap="round"/><path d="M30.5 7 L21 19" stroke="#f4f4f4" stroke-width="1.6" stroke-linecap="round"/>
<path d="M21.3 17.2 c-2.6-.8-5 .8-5.2 3.4 c-.2 2-1.4 3-2.6 3.4 c3.4 1.4 8.6.4 9.6-3.6z" fill="#5b9fd8" stroke="#3b6e9e" stroke-width="0.8"/></svg>
<span class="t" style="left:841.4px;top:83.4px;font-size:13px;color:#3b3a3c;">Dar formato</span>
<span class="t" style="left:837.7px;top:100.0px;font-size:13px;color:#3b3a3c;">como tabla</span>
<svg class="b" style="left:905.2px;top:104.9px;" width="7.6" height="4.8" viewBox="0 0 7.6 4.8"><path d="M1 1 L3.8 3.8 L6.6 1" fill="none" stroke="#3d3c3e" stroke-width="1.45" stroke-linecap="round" stroke-linejoin="round"/></svg>
<svg class="b" style="left:931.0px;top:50.5px;" width="33" height="29" viewBox="0 0 33 29"><rect x="0.8" y="0.8" width="28" height="21.6" fill="#eeeeee" stroke="#666" stroke-width="1"/>
<path d="M0.8 5 H28.8 M0.8 18 H28.8 M6 0.8 V22.4 M24 0.8 V22.4" stroke="#777" stroke-width="0.9" fill="none" stroke-dasharray="2 1.2"/>
<rect x="6" y="5" width="18" height="13" fill="#5aa0e2" stroke="#3b6e9e" stroke-width="0.8"/><path d="M30.5 7 L21 19" stroke="#666" stroke-width="3.2" stroke-linecap="round"/><path d="M30.5 7 L21 19" stroke="#f4f4f4" stroke-width="1.6" stroke-linecap="round"/>
<path d="M21.3 17.2 c-2.6-.8-5 .8-5.2 3.4 c-.2 2-1.4 3-2.6 3.4 c3.4 1.4 8.6.4 9.6-3.6z" fill="#5b9fd8" stroke="#3b6e9e" stroke-width="0.8"/></svg>
<span class="t" style="left:920.2px;top:83.4px;font-size:13px;color:#3b3a3c;letter-spacing:-0.55px;word-spacing:0.97px;">Estilos de</span>
<span class="t" style="left:925.0px;top:100.0px;font-size:13px;color:#3b3a3c;letter-spacing:-0.27px;">celda</span>
<svg class="b" style="left:958.7px;top:104.9px;" width="7.6" height="4.8" viewBox="0 0 7.6 4.8"><path d="M1 1 L3.8 3.8 L6.6 1" fill="none" stroke="#3d3c3e" stroke-width="1.45" stroke-linecap="round" stroke-linejoin="round"/></svg>
<span class="t" style="left:847.2px;top:127.8px;font-size:11.5px;color:#454446;letter-spacing:-0.51px;">Estilos</span>
<svg class="b" style="left:995.5px;top:46.5px;" width="18" height="17" viewBox="0 0 18 17"><rect x="1.5" y="3" width="14.5" height="12" fill="#f0f0f0" stroke="#4a4a4a" stroke-width="1.1" stroke-dasharray="2.2 1.2"/><path d="M1.5 7 H16 M1.5 11 H16 M6.3 3 V15 M11.2 3 V15" stroke="#555" stroke-width="0.9" stroke-dasharray="2.2 1.4"/><rect x="6.3" y="5.3" width="10" height="4.2" fill="#5aa0e2" stroke="#2b6cb3" stroke-width="0.9"/><path d="M6.5 7.3 H0.8 M3 5 L0.6 7.3 L3 9.6" fill="none" stroke="#2b6cb3" stroke-width="1.3"/></svg>
<span class="t" style="left:1017.3px;top:48.8px;font-size:13px;color:#3b3a3c;letter-spacing:-0.48px;">Insertar</span>
<svg class="b" style="left:1076.2px;top:53.1px;" width="7.6" height="4.8" viewBox="0 0 7.6 4.8"><path d="M1 1 L3.8 3.8 L6.6 1" fill="none" stroke="#3d3c3e" stroke-width="1.45" stroke-linecap="round" stroke-linejoin="round"/></svg>
<svg class="b" style="left:995.5px;top:73.5px;" width="18" height="17" viewBox="0 0 18 17"><rect x="1.5" y="3" width="14.5" height="12" fill="#f0f0f0" stroke="#4a4a4a" stroke-width="1.1" stroke-dasharray="2.2 1.2"/><path d="M1.5 7 H16 M1.5 11 H16 M6.3 3 V15 M11.2 3 V15" stroke="#555" stroke-width="0.9" stroke-dasharray="2.2 1.4"/><rect x="3.2" y="5.6" width="7" height="5" fill="#5aa0e2" stroke="#2b6cb3" stroke-width="0.9"/><path d="M11.5 5.5 L16.5 10.5 M16.5 5.5 L11.5 10.5" stroke="#d83b3b" stroke-width="1.4"/></svg>
<span class="t" style="left:1017.3px;top:75.5px;font-size:13px;color:#3b3a3c;letter-spacing:-0.32px;">Eliminar</span>
<svg class="b" style="left:1080.2px;top:80.1px;" width="7.6" height="4.8" viewBox="0 0 7.6 4.8"><path d="M1 1 L3.8 3.8 L6.6 1" fill="none" stroke="#3d3c3e" stroke-width="1.45" stroke-linecap="round" stroke-linejoin="round"/></svg>
<svg class="b" style="left:995.5px;top:100.5px;" width="18" height="17" viewBox="0 0 18 17"><rect x="1.5" y="3" width="14.5" height="12" fill="#f0f0f0" stroke="#4a4a4a" stroke-width="1.1" stroke-dasharray="2.2 1.2"/><path d="M1.5 7 H16 M1.5 11 H16 M6.3 3 V15 M11.2 3 V15" stroke="#555" stroke-width="0.9" stroke-dasharray="2.2 1.4"/><rect x="3.6" y="5.2" width="10.3" height="7.6" fill="#5aa0e2" stroke="#2b6cb3" stroke-width="0.9"/><path d="M3.6 0.8 V3 M13.9 0.8 V3 M3.6 1.2 H13.9" stroke="#2b6cb3" stroke-width="1"/></svg>
<span class="t" style="left:1017.3px;top:102.4px;font-size:13px;color:#3b3a3c;letter-spacing:-0.28px;">Formato</span>
<svg class="b" style="left:1067.2px;top:107.1px;" width="7.6" height="4.8" viewBox="0 0 7.6 4.8"><path d="M1 1 L3.8 3.8 L6.6 1" fill="none" stroke="#3d3c3e" stroke-width="1.45" stroke-linecap="round" stroke-linejoin="round"/></svg>
<span class="t" style="left:1027.0px;top:127.8px;font-size:11.5px;color:#454446;letter-spacing:-0.76px;">Celdas</span>
<span class="t" style="left:1120.0px;top:43.2px;font-size:22.5px;color:#474648;">Σ</span>
<svg class="b" style="left:1147.2px;top:53.1px;" width="7.6" height="4.8" viewBox="0 0 7.6 4.8"><path d="M1 1 L3.8 3.8 L6.6 1" fill="none" stroke="#3d3c3e" stroke-width="1.45" stroke-linecap="round" stroke-linejoin="round"/></svg>
<svg class="b" style="left:1117.5px;top:74.0px;" width="18" height="16" viewBox="0 0 18 16"><rect x="0.8" y="0.8" width="16" height="14" fill="#ececec" stroke="#555" stroke-width="1"/><path d="M0.8 3.6 H16.8" stroke="#555" stroke-width="1"/><path d="M8.8 5.5 V12 M6.2 9.6 L8.8 12.2 L11.4 9.6" fill="none" stroke="#2f7fd0" stroke-width="1.4"/></svg>
<svg class="b" style="left:1141.2px;top:80.1px;" width="7.6" height="4.8" viewBox="0 0 7.6 4.8"><path d="M1 1 L3.8 3.8 L6.6 1" fill="none" stroke="#3d3c3e" stroke-width="1.45" stroke-linecap="round" stroke-linejoin="round"/></svg>
<svg class="b" style="left:1118.0px;top:100.5px;" width="18" height="17" viewBox="0 0 18 17"><path d="M10.5 1.2 L16 6.7 L8 14.8 H4.2 L1.5 12 Z" fill="#f6e3ee" stroke="#c2307f" stroke-width="1.3" stroke-linejoin="round"/><path d="M5.8 6 L11.3 11.5 L8 14.8 H4.2 L1.5 12 Z" fill="#d6408f"/></svg>
<svg class="b" style="left:1141.2px;top:107.1px;" width="7.6" height="4.8" viewBox="0 0 7.6 4.8"><path d="M1 1 L3.8 3.8 L6.6 1" fill="none" stroke="#3d3c3e" stroke-width="1.45" stroke-linecap="round" stroke-linejoin="round"/></svg>
<svg class="b" style="left:1179.0px;top:48.0px;" width="34" height="30" viewBox="0 0 34 30"><text x="0.3" y="13.2" font-size="16" font-family="Liberation Sans" fill="#2f7fd0">A</text><text x="1" y="28.6" font-size="16.5" font-family="Liberation Sans" fill="#4a4a4a">Z</text>
<path d="M13 7.5 H32 L25 15.5 V24 L20.5 21.5 V15.5 Z" fill="#e9e9e9" stroke="#444" stroke-width="1.1" stroke-linejoin="round"/></svg>
<span class="t" style="left:1168.6px;top:83.4px;font-size:13px;color:#3b3a3c;letter-spacing:-0.54px;word-spacing:0.94px;">Ordenar y</span>
<span class="t" style="left:1174.8px;top:100.0px;font-size:13px;color:#3b3a3c;letter-spacing:0.08px;">filtrar</span>
<svg class="b" style="left:1207.7px;top:104.9px;" width="7.6" height="4.8" viewBox="0 0 7.6 4.8"><path d="M1 1 L3.8 3.8 L6.6 1" fill="none" stroke="#3d3c3e" stroke-width="1.45" stroke-linecap="round" stroke-linejoin="round"/></svg>
<svg class="b" style="left:1250.0px;top:46.5px;" width="33" height="33" viewBox="0 0 33 33"><circle cx="20.3" cy="11.9" r="11" fill="#ececec" stroke="#555" stroke-width="1.1"/><path d="M12.8 20 L1.5 31" stroke="#555" stroke-width="1.4" stroke-linecap="round"/></svg>
<span class="t" style="left:1244.0px;top:83.4px;font-size:13px;color:#3b3a3c;letter-spacing:-0.90px;transform:scaleX(1.028);word-spacing:1.59px;">Buscar y</span>
<span class="t" style="left:1229.7px;top:100.0px;font-size:13px;color:#3b3a3c;letter-spacing:-0.40px;">seleccionar</span>
<svg class="b" style="left:1295.2px;top:104.9px;" width="7.6" height="4.8" viewBox="0 0 7.6 4.8"><path d="M1 1 L3.8 3.8 L6.6 1" fill="none" stroke="#3d3c3e" stroke-width="1.45" stroke-linecap="round" stroke-linejoin="round"/></svg>
<span class="t" style="left:1191.0px;top:127.8px;font-size:11.5px;color:#454446;letter-spacing:-0.39px;">Edición</span>
<svg class="b" style="left:1351.5px;top:47.0px;" width="32" height="31" viewBox="0 0 32 31"><rect x="1" y="1" width="29.4" height="28.6" fill="none" stroke="#c7654d" stroke-width="1.9"/><rect x="4.5" y="4.5" width="9" height="9" fill="none" stroke="#c7654d" stroke-width="1.2"/><rect x="17.6" y="4.5" width="9" height="9" fill="none" stroke="#c7654d" stroke-width="1.2"/><rect x="4.5" y="17.3" width="9" height="9" fill="none" stroke="#c7654d" stroke-width="1.2"/><rect x="17.6" y="17.3" width="9" height="9" fill="none" stroke="#c7654d" stroke-width="1.2"/></svg>
<span class="t" style="left:1325.0px;top:83.4px;font-size:13px;color:#3b3a3c;letter-spacing:-0.22px;">Complementos</span>
<span class="t" style="left:1329.4px;top:127.8px;font-size:11.5px;color:#454446;letter-spacing:-0.34px;">Complementos</span>
<svg class="b" style="left:1435.0px;top:46.5px;" width="34" height="32" viewBox="0 0 34 32"><defs><linearGradient id="cg1" x1="0.3" y1="0" x2="0.1" y2="1"><stop offset="0" stop-color="#2b86e6"/><stop offset=".3" stop-color="#27b7c4"/><stop offset=".55" stop-color="#56c96b"/><stop offset=".78" stop-color="#f2d53a"/><stop offset="1" stop-color="#f58a2a"/></linearGradient>
<linearGradient id="cg2" x1="0.7" y1="0" x2="0.3" y2="1"><stop offset="0" stop-color="#9a5cf2"/><stop offset=".45" stop-color="#e34aa0"/><stop offset=".8" stop-color="#f7763f"/><stop offset="1" stop-color="#e8452c"/></linearGradient>
<linearGradient id="cg3" x1="0" y1="0" x2="1" y2="0.4"><stop offset="0" stop-color="#2c9bf0"/><stop offset="1" stop-color="#2253c9"/></linearGradient></defs>
<path d="M14 2 C9 2 5 6 3.5 12 C2 17 1 21 3 24 C5 27 10 26.5 12.5 23 C14 20 16 12 17.5 8 C18.5 5 21 3.5 23 3.500 C21 2 18 2 14 2 Z" fill="url(#cg1)"/>
<path d="M19.6 29.400 C24.6 29.400 28.6 25.400 30.1 19.400 C31.6 14.400 32.6 10.400 30.6 7.400 C28.6 4.400 23.6 4.900 21.1 8.400 C19.6 11.400 17.6 19.400 16.1 23.400 C15.1 26.400 12.6 27.900 10.6 27.900 C12.6 29.400 15.6 29.400 19.6 29.400 Z" fill="url(#cg2)"/>
<path d="M12 3.200 C15 1.600 21 1.600 24 4 C26 6 26.3 8.500 25.300 11 C24.300 8.200 22 6.500 19 6.300 C16 6.100 14 5.200 12 3.200 Z" fill="url(#cg3)"/></svg>
<span class="t" style="left:1431.7px;top:84.6px;font-size:13.5px;color:#3b3a3c;letter-spacing:-0.24px;">Copilot</span>
<svg class="b" style="left:1447.2px;top:105.1px;" width="7.6" height="4.8" viewBox="0 0 7.6 4.8"><path d="M1 1 L3.8 3.8 L6.6 1" fill="none" stroke="#3d3c3e" stroke-width="1.45" stroke-linecap="round" stroke-linejoin="round"/></svg>
<svg class="b" style="left:1514.0px;top:49.5px;" width="31" height="32" viewBox="0 0 31 32"><path d="M3 1 H13.5 L20 7.5 V12 M20 7.5 H13.5 V1 M11 25 H3 a2 2 0 0 1 -2-2 V3 a2 2 0 0 1 2-2" fill="none" stroke="#4a78c8" stroke-width="1.3" stroke-linejoin="round"/>
<path d="M5 17.5 c3-2.5 5-7 5-10.5 c0-1.2-1.4-1.2-1.4 0 c0 3 3 7.5 7 8.5 c1.4.3 1.4-1.2 0-1.2 c-4 0-8 1.2-10.6 3.2z" fill="none" stroke="#4a78c8" stroke-width="1"/>
<rect x="12" y="20" width="11" height="6.5" rx="3.2" fill="none" stroke="#4a78c8" stroke-width="1.5" transform="rotate(-45 17.5 23)"/><rect x="18.5" y="13.5" width="11" height="6.5" rx="3.2" fill="none" stroke="#4a78c8" stroke-width="1.5" transform="rotate(-45 24 17)"/></svg>
<span class="t" style="left:1505.0px;top:83.0px;font-size:13px;color:#3b3a3c;letter-spacing:-0.60px;">Create</span>
<span class="t" style="left:1507.8px;top:99.8px;font-size:13px;color:#3b3a3c;letter-spacing:-0.90px;transform:scaleX(0.951);word-spacing:1.60px;">a PDF</span>
<span class="t" style="left:1490.0px;top:127.8px;font-size:11.5px;color:#454446;letter-spacing:-0.34px;word-spacing:0.63px;">Adobe Acro...</span>
<svg class="b" style="left:1573.5px;top:124.8px;" width="11" height="6.5" viewBox="0 0 11 6.5"><path d="M1 1 L5.5 5.5 L10 1" fill="none" stroke="#3d3c3e" stroke-width="1.3" stroke-linecap="round" stroke-linejoin="round"/></svg>
<div class="b" style="left:1582.0px;top:181.0px;width:22.0px;height:572.0px;background:#4e4d4f;"></div>
<div class="b" style="left:1584.5px;top:184.0px;width:16.0px;height:568.0px;background:#39373a;border-radius:8px;"></div>
<div class="b" style="left:1588.2px;top:201.0px;width:9.2px;height:440.0px;background:#c6c6c6;border-radius:4.6px;"></div>
<svg class="b" style="left:1587.8px;top:187.8px;" width="10" height="8" viewBox="0 0 10 8"><path d="M5 0.8 L9.6 7.2 H0.4 Z" fill="#dedede"/></svg>
<svg class="b" style="left:1587.8px;top:741.0px;" width="10" height="8" viewBox="0 0 10 8"><path d="M5 7.2 L9.6 0.8 H0.4 Z" fill="#dedede"/></svg>
<div class="b" style="left:0.0px;top:752.5px;width:1604.0px;height:33.5px;background:#ffffff;"></div>
<div class="b" style="left:0.0px;top:752.5px;width:113.8px;height:33.5px;background:#4f4c50;border-radius:0 6px 0 0;"></div>
<div class="b" style="left:270.4px;top:752.5px;width:1333.6px;height:33.5px;background:#4f4c50;border-radius:6px 0 0 0;"></div>
<div class="b" style="left:0.0px;top:781.5px;width:1604.0px;height:4.5px;background:#4f4c50;"></div>
<div class="b" style="left:0.0px;top:785.5px;width:1604.0px;height:1.0px;background:#5e5c5f;"></div>
<div class="b" style="left:113.8px;top:776.0px;width:156.6px;height:10.0px;background:#4f4c50;"></div>
<div class="b" style="left:113.8px;top:752.5px;width:156.6px;height:29.0px;background:#ffffff;border-radius:0 0 6px 6px;"></div>
<span class="t" style="left:122.3px;top:759.4px;font-size:14.5px;color:#2c2c2c;letter-spacing:-0.74px;word-spacing:1.42px;">FORMULAS LOGICAS</span>
<div class="b" style="left:122.0px;top:777.6px;width:140.0px;height:1.8px;background:#2e7d55;"></div>
<svg class="b" style="left:20.0px;top:762.0px;" width="10" height="14" viewBox="0 0 10 14"><path d="M8 1.5 L2 7 L8 12.5" fill="none" stroke="#8a888b" stroke-width="1.4"/></svg>
<svg class="b" style="left:54.0px;top:762.0px;" width="10" height="14" viewBox="0 0 10 14"><path d="M2 1.5 L8 7 L2 12.5" fill="none" stroke="#8a888b" stroke-width="1.4"/></svg>
<span class="t" style="left:289.6px;top:763.0px;font-size:14.5px;color:#e2e2e2;letter-spacing:-0.90px;transform:scaleX(0.955);word-spacing:1.60px;">EJERCICIOS F.L</span>
<span class="t" style="left:414.8px;top:763.0px;font-size:14.5px;color:#e2e2e2;letter-spacing:-0.90px;transform:scaleX(1.019);word-spacing:1.60px;">FORMULAS DE ANALISIS ESTADISTIC</span>
<span class="t" style="left:686.5px;top:763.0px;font-size:14.5px;color:#e2e2e2;letter-spacing:-0.90px;transform:scaleX(0.955);word-spacing:1.60px;">EJERCICIOS A.E</span>
<div class="b" style="left:273.9px;top:760.0px;width:1.0px;height:19.0px;background:#6d6b6e;"></div>
<div class="b" style="left:398.5px;top:760.0px;width:1.0px;height:19.0px;background:#6d6b6e;"></div>
<div class="b" style="left:670.8px;top:760.0px;width:1.0px;height:19.0px;background:#6d6b6e;"></div>
<div class="b" style="left:797.7px;top:760.0px;width:1.0px;height:19.0px;background:#6d6b6e;"></div>
<svg class="b" style="left:841.0px;top:762.0px;" width="14" height="14" viewBox="0 0 14 14"><path d="M7 1 V13 M1 7 H13" stroke="#e8e8e8" stroke-width="1.4"/></svg>
<div class="b" style="left:962.3px;top:764.1px;width:2.0px;height:2.0px;background:#d8d8d8;"></div>
<div class="b" style="left:962.3px;top:768.3px;width:2.0px;height:2.0px;background:#d8d8d8;"></div>
<div class="b" style="left:962.3px;top:772.5px;width:2.0px;height:2.0px;background:#d8d8d8;"></div>
<div class="b" style="left:981.0px;top:760.5px;width:601.5px;height:17.5px;background:#39373a;border-radius:9px;"></div>
<div class="b" style="left:998.0px;top:764.5px;width:540.0px;height:9.5px;background:#c6c6c6;border-radius:4.8px;"></div>
<svg class="b" style="left:985.0px;top:764.5px;" width="8" height="10" viewBox="0 0 8 10"><path d="M0.8 5 L7 0.8 V9.2 Z" fill="#e2e2e2"/></svg>
<svg class="b" style="left:1571.0px;top:764.5px;" width="8" height="10" viewBox="0 0 8 10"><path d="M7.2 5 L1 0.8 V9.2 Z" fill="#e2e2e2"/></svg>
<div class="b" style="left:0.0px;top:786.5px;width:1604.0px;height:20.5px;background:#504e51;"></div>
<span class="t" style="left:7.4px;top:792.0px;font-size:11.5px;color:#dcdcdc;letter-spacing:-0.35px;">Listo</span>
<svg class="b" style="left:75.5px;top:790.5px;" width="16" height="15" viewBox="0 0 16 15"><rect x="0.8" y="1" width="13.5" height="11" fill="none" stroke="#d0d0d0" stroke-width="1.1"/><path d="M0.8 3.8 H14.3 M3 6.3 H8 M3 8.8 H6.5" stroke="#d0d0d0" stroke-width="1"/><circle cx="11" cy="10.5" r="3.4" fill="#504e51" stroke="#d0d0d0" stroke-width="1.1"/><circle cx="11" cy="10.5" r="1.2" fill="#d0d0d0"/></svg>
<svg class="b" style="left:108.5px;top:790.0px;" width="17" height="16" viewBox="0 0 17 16"><circle cx="7" cy="2.6" r="1.7" fill="none" stroke="#dcdcdc" stroke-width="1.1"/><path d="M1 5.5 C4 6.8 10 6.8 13 5.5 M7 6.5 V10 M7 10 L3.2 15 M7 10 L9 12.5" fill="none" stroke="#dcdcdc" stroke-width="1.2" stroke-linecap="round"/><path d="M10.5 11 L15.5 15.5 M15.5 11 L10.5 15.5" stroke="#dcdcdc" stroke-width="1.2"/></svg>
<span class="t" style="left:128.0px;top:792.0px;font-size:11.5px;color:#e8e8e8;font-weight:700;letter-spacing:-0.55px;word-spacing:1.02px;">Accesibilidad: es necesario investigar</span>
<div class="b" style="left:1291.0px;top:787.0px;width:42.0px;height:20.0px;background:#5b595c;"></div>
<svg class="b" style="left:1303.5px;top:791.0px;" width="15" height="14" viewBox="0 0 15 14"><rect x="0.6" y="0.6" width="13.8" height="12.8" fill="none" stroke="#ececec" stroke-width="1.2"/><path d="M5.2 0.6 V13.4 M9.8 0.6 V13.4 M0.6 4.9 H14.4 M0.6 9.2 H14.4" stroke="#ececec" stroke-width="1.1"/></svg>
<svg class="b" style="left:1346.0px;top:791.0px;" width="16" height="14" viewBox="0 0 16 14"><rect x="0.6" y="0.6" width="14.3" height="12.8" fill="none" stroke="#d6d6d6" stroke-width="1.2"/><rect x="3.6" y="3" width="8.3" height="8" fill="none" stroke="#d6d6d6" stroke-width="1"/><rect x="5.8" y="5.2" width="4" height="3.6" fill="none" stroke="#d6d6d6" stroke-width="0.9"/></svg>
<svg class="b" style="left:1388.0px;top:791.0px;" width="16" height="14" viewBox="0 0 16 14"><path d="M0.6 0.6 V13.4 H14.6 V0.6 M5.2 0.6 V7.5 H10.2 V0.6" fill="none" stroke="#e6e6e6" stroke-width="1.3"/></svg>
<div class="b" style="left:1422.5px;top:797.3px;width:7.0px;height:1.2px;background:#c8c8c8;"></div>
<div class="b" style="left:1436.0px;top:797.5px;width:104.5px;height:1.0px;background:#b8b8b8;"></div>
<div class="b" style="left:1486.3px;top:791.8px;width:3.6px;height:12.0px;background:#d9d9d9;"></div>
<svg class="b" style="left:1544.0px;top:793.0px;" width="10" height="10" viewBox="0 0 10 10"><path d="M5 1 V9 M1 5 H9" stroke="#d0d0d0" stroke-width="1.2"/></svg>
<span class="t" style="left:1568.0px;top:792.3px;font-size:11px;color:#dcdcdc;letter-spacing:-0.88px;">100%</span>
<svg class="b" style="left:880px;top:203px;" width="570" height="380" viewBox="880 203 570 380"><defs><filter id="soft" x="-5%" y="-5%" width="110%" height="110%"><feGaussianBlur stdDeviation="1.6"/></filter></defs><rect x="891" y="210.5" width="548" height="366" fill="#fef9f3" filter="url(#soft)"/><path d="M1083 382 H1402" stroke="#e4dfd9" stroke-width="1.6"/><path d="M1083 414.2 H1402" stroke="#e4dfd9" stroke-width="1.6"/><path d="M1083 446.6 H1402" stroke="#e4dfd9" stroke-width="1.6"/><path d="M1083 479 H1402" stroke="#e4dfd9" stroke-width="1.6"/><path d="M1096.6 520 V448 a3 3 0 0 1 3 -3 H1137.0 a3 3 0 0 1 3 3 V520 Z" fill="#f9aa4d"/><path d="M1157.6 520 V429.3 a3 3 0 0 1 3 -3 H1198.0 a3 3 0 0 1 3 3 V520 Z" fill="#f5776b"/><path d="M1217.8 520 V399.3 a3 3 0 0 1 3 -3 H1258.2 a3 3 0 0 1 3 3 V520 Z" fill="#17566f"/><path d="M1279 520 V374 a3 3 0 0 1 3 -3 H1319.4 a3 3 0 0 1 3 3 V520 Z" fill="#5fb575"/><path d="M1340 520 V359 a3 3 0 0 1 3 -3 H1380.4 a3 3 0 0 1 3 3 V520 Z" fill="#58aecb"/><path d="M1083 521 H1402" stroke="#b4ccd5" stroke-width="3" stroke-linecap="round"/><path d="M957 478 L952 575 H976.5 L988.5 493 L993 575 H1016 L1017.5 478 Z" fill="#32506d"/><path d="M913 389.5 L928.5 386.5 L938.5 413.5 L968 393 L966 416 L934.5 432 Q924 434.5 921.5 426 Z" fill="#32506d"/><path d="M912.3 387.6 L928 384.5 L928.8 387.3 L913 390.4 Z" fill="#ffffff"/><path d="M913.6 387 C910 381 906.5 375 905.5 369.8 C904.8 366.5 905.8 363 906.8 361.1 C907.2 358.5 907.6 357.2 908.6 356.8 C910 356 911.5 356.6 912.3 357.8 C913.5 355.9 915.6 355.9 916.7 356.8 C918.3 358.3 919.2 361 919.8 363.6 L921.6 371.5 C923.3 369.8 925 368.9 926.6 368.3 C928.2 367.2 929.4 366.9 930.3 367.3 C931.6 367.8 931.5 369 930.9 369.800 C929.5 373 928.5 376.500 927.8 379.700 L928.5 387 Z" fill="#fbd3a2"/><path d="M909.5 360 L912 368 M913.2 358.5 L915.8 367.5 M917.2 360 L919.3 368.5" stroke="#f2c08d" stroke-width="0.7" fill="none" stroke-linecap="round"/><path d="M1010 393.5 C1022 396 1030 404 1038 415 C1044 423 1049.5 430 1052 435 C1053 438 1051.5 441 1049.5 444 L1033 468 L1022 460 L1033 437 L1018 425 Z" fill="#32506d"/><path d="M966 392 C960 400 958 420 957 440 L955.5 479.5 C970 484 1000 485.5 1017.5 481.5 L1019.5 450 L1021 420 C1021 405 1018 396 1012 393 L1001 388 H977 Z" fill="#32506d"/><path d="M956 478.5 C970 483.5 1000 485 1017.5 480.8" fill="none" stroke="#263f5c" stroke-width="1.6"/><path d="M1022.5 459.5 C1018 459 1014 459.5 1011.5 461 C1010 462 1011 463.8 1013 463.5 L1016 463 C1013 464.5 1010.8 466.5 1010.5 468.3 C1010.5 470 1012.5 470.3 1014 469.3 C1013 470.8 1012.5 472.5 1013.3 473.5 C1014.3 474.6 1016 474 1017.3 472.8 C1017 474.5 1017.5 476 1019 476.3 C1023 476.5 1027.5 471 1030 466.5 Z" fill="#fbd3a2"/><path d="M1021.5 458.3 L1024 456.3 L1033.5 464.8 L1031.3 467.8 Z" fill="#ffffff"/><path d="M980.5 374 H1002 V392 H980.5 Z" fill="#f3bd8a"/><path d="M978.5 388 L985 384.5 L992 392 L1000.5 385 L1004.5 388.5 L997 437 Z" fill="#f4f7fb"/><path d="M987.3 393 L992.3 390.3 L997.5 393.5 L995.6 399.5 L1000 421 L996.8 438.8 L988.2 421.5 L989.4 399.5 Z" fill="#d9463d"/><path d="M989.4 399.5 L995.6 399.5" stroke="#b8352e" stroke-width="0.8"/><path d="M977 388 L979.5 386.5 L997 438.5 L995.5 442 L978 412 L982.5 409.5 L975.5 405 Z" fill="#32506d" stroke="#263f5c" stroke-width="0.9" stroke-linejoin="round"/><path d="M1005 387.5 L1002.5 386 L996.5 438.5 L998 442 L1011 414 L1007 411.5 L1012.5 406.5 Z" fill="#32506d" stroke="#263f5c" stroke-width="0.9" stroke-linejoin="round"/><circle cx="996.7" cy="454.3" r="1.9" fill="#1f3550"/><circle cx="996.7" cy="468.5" r="1.9" fill="#1f3550"/><ellipse cx="947.6" cy="350" rx="9.3" ry="12" fill="#fbd3a2"/><path d="M946 344 C949.5 345 951 350 949.5 355" fill="none" stroke="#f0b98a" stroke-width="2" stroke-linecap="round"/><path d="M957 300 H1027 C1029 320 1029 340 1026.5 354 C1024 366 1013 378 998 381 C983 382 968 375 962.5 363 C958 352 956 330 957 300 Z" fill="#fbd3a2"/><path d="M953.5 282 C962 275 975 272.5 988 273 C1000 273.3 1014 276 1030 285.5 L1022.5 292.5 C1027 299 1031 308 1031 318 C1031 324 1029.5 329 1027 333 C1027.5 322 1025 305 1021 297 C1012 303 990 307 963.5 309 C962.5 318 960.5 330 958.5 337 L955 344.5 C945 340 935.5 334 934 316 C933 300 940 287 953.5 282 Z" fill="#46302b"/><path d="M972 326 C976 319.5 986 317.5 992 323" fill="none" stroke="#46302b" stroke-width="2.8" stroke-linecap="round"/><path d="M1009.5 320 C1013 315 1019.5 315.5 1022.5 322" fill="none" stroke="#46302b" stroke-width="2.8" stroke-linecap="round"/><ellipse cx="981.7" cy="339.5" rx="5.3" ry="7.4" fill="#231815"/><ellipse cx="1013.4" cy="338" rx="4.9" ry="7" fill="#231815"/><path d="M1005.5 347 C1008.5 349 1009 352.5 1006 353.8" fill="none" stroke="#dc8f6d" stroke-width="1.3" stroke-linecap="round"/><path d="M983.5 357.5 C992 361.5 1003 362.5 1011.5 360.5 C1010.5 368 1004.5 375.5 996.5 375.5 C989 375.3 984.5 366 983.5 357.5 Z" fill="#6a1e22"/><path d="M983.5 357.5 C992 361.5 1003 362.5 1011.5 360.5 C1011.3 362.3 1010.8 364 1010.2 365.3 C1002 367 992 366 984.8 362.8 C984.2 361 983.7 359.3 983.5 357.5 Z" fill="#ffffff"/><path d="M987.5 369.5 C992 366.5 1001 366.8 1006.5 370 C1004 373.5 1000.5 375.5 996.5 375.5 C993 375.4 989.8 373 987.5 369.5 Z" fill="#e65a50"/></svg>
<span class="t" style="left:1089.5px;top:256.0px;font-size:25.5px;font-weight:700;color:#31475f;-webkit-text-stroke:0.45px #31475f;text-shadow:0.9px 0 0 #31475f,-0.9px 0 0 #31475f;transform:scaleX(0.760);">SI</span>
<span class="t" style="left:1054.0px;top:292.2px;font-size:25.5px;font-weight:700;color:#31475f;-webkit-text-stroke:0.45px #31475f;text-shadow:0.9px 0 0 #31475f,-0.9px 0 0 #31475f;transform:scaleX(0.650);">SI.CONJUNTO</span>
<span class="t" style="left:1095.0px;top:339.8px;font-size:25.5px;font-weight:700;color:#31475f;-webkit-text-stroke:0.45px #31475f;text-shadow:0.9px 0 0 #31475f,-0.9px 0 0 #31475f;transform:scaleX(0.706);">MAX</span>
<span class="t" style="left:1192.7px;top:256.0px;font-size:25.5px;font-weight:700;color:#31475f;-webkit-text-stroke:0.45px #31475f;text-shadow:0.9px 0 0 #31475f,-0.9px 0 0 #31475f;transform:scaleX(0.647);">CONTAR</span>
<span class="t" style="left:1188.6px;top:301.7px;font-size:25.5px;font-weight:700;color:#31475f;-webkit-text-stroke:0.45px #31475f;text-shadow:0.9px 0 0 #31475f,-0.9px 0 0 #31475f;transform:scaleX(0.635);">CONTAR.SI</span>
<span class="t" style="left:1172.0px;top:328.2px;font-size:25.5px;font-weight:700;color:#31475f;-webkit-text-stroke:0.45px #31475f;text-shadow:0.9px 0 0 #31475f,-0.9px 0 0 #31475f;transform:scaleX(0.619);">SI.CONJUNTO</span>
<span class="t" style="left:1307.0px;top:251.9px;font-size:25.5px;font-weight:700;color:#31475f;-webkit-text-stroke:0.45px #31475f;text-shadow:0.9px 0 0 #31475f,-0.9px 0 0 #31475f;transform:scaleX(0.636);">CONTAR.SI</span>
<span class="t" style="left:1303.4px;top:277.2px;font-size:25.5px;font-weight:700;color:#31475f;-webkit-text-stroke:0.45px #31475f;text-shadow:0.9px 0 0 #31475f,-0.9px 0 0 #31475f;transform:scaleX(0.631);">CONJUNTO</span>
<span class="t" style="left:1314.6px;top:314.2px;font-size:25.5px;font-weight:700;color:#31475f;-webkit-text-stroke:0.45px #31475f;text-shadow:0.9px 0 0 #31475f,-0.9px 0 0 #31475f;transform:scaleX(0.619);">CONTARA</span>
</div></body></html>
